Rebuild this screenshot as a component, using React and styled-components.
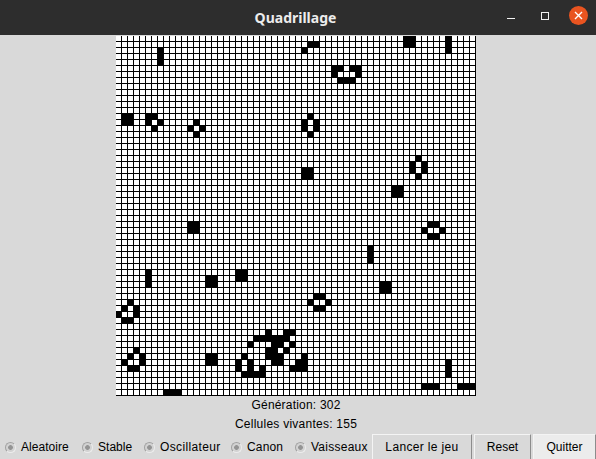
import React from "react";
import styled, { createGlobalStyle } from "styled-components";

const Global = createGlobalStyle`
  html, body { margin: 0; padding: 0; background: #d9d9d9; }
  * { box-sizing: border-box; }
`;

const Win = styled.div`
  width: 596px;
  height: 459px;
  overflow: hidden;
  background: #d9d9d9;
  display: flex;
  flex-direction: column;
  font-family: "Liberation Sans", Arial, sans-serif;
  font-size: 12px;
  color: #000;
`;

const TitleBar = styled.header`
  flex: none;
  height: 35px;
  background: #2d2d2d;
  display: grid;
  grid-template-columns: 1fr auto 1fr;
  align-items: center;
`;

const Title = styled.h1`
  grid-column: 2;
  margin: 0 5px 0 0;
  font-family: "Noto Sans", sans-serif;
  font-size: 14px;
  font-weight: 700;
  color: #ececec;
`;

const Controls = styled.div`
  grid-column: 3;
  justify-self: end;
  display: flex;
  align-items: center;
  padding: 0 8px 3px 0;
`;

const Ctl = styled.span`
  display: flex;
  width: 34px;
  height: 20px;
  align-items: center;
  justify-content: center;
`;

const CloseDisc = styled.span`
  display: flex;
  flex: none;
  width: 19px;
  height: 19px;
  margin-left: 7px;
  align-self: flex-start;
  align-items: center;
  justify-content: center;
  border-radius: 50%;
  background: #e95420;
`;

const Board = styled.div`
  flex: none;
  margin: 1px 0 0 116px;
  width: 360px;
  height: 360px;
  display: grid;
  grid-template-columns: repeat(60, 6px);
  grid-auto-rows: 6px;
  background: #000;
`;

const Cell = styled.div`
  width: 5px;
  height: 5px;
  background: ${(p) => (p.$alive ? "#000" : "#fff")};
`;

const Stat = styled.div`
  flex: none;
  height: 19px;
  line-height: 18px;
  text-align: center;
  padding-right: 4px;
  letter-spacing: ${(p) => p.$track}px;
`;

const Footer = styled.footer`
  flex: none;
  height: 26px;
  display: flex;
  align-items: flex-start;
`;

const Options = styled.div`
  flex: none;
  width: 372px;
  height: 26px;
  display: flex;
  align-items: center;
  padding-left: 5px;
`;

const Option = styled.label`
  flex: none;
  width: ${(p) => p.$w}px;
  display: flex;
  align-items: center;
  gap: 5px;
  white-space: nowrap;
  letter-spacing: ${(p) => p.$track}px;
`;

const RadioMark = styled.span`
  flex: none;
  width: 11px;
  height: 11px;
  border-radius: 50%;
  border: 1px solid;
  border-color: #a2a2a2 #ececec #ececec #a2a2a2;
  background: radial-gradient(circle, #949494 0 2px, #d2d2d2 2.7px);
`;

const Buttons = styled.div`
  flex: none;
  display: flex;
  gap: 2px;
`;

const Button = styled.button`
  flex: none;
  width: ${(p) => p.$w}px;
  height: 30px;
  margin: 0;
  padding: 0 0 4px;
  font: inherit;
  color: #000;
  letter-spacing: ${(p) => p.$track || 0}px;
  background: ${(p) => (p.$active ? "#ececec" : "#d9d9d9")};
  border: 1px solid;
  border-color: #f4f4f4 #8c8c8c #8c8c8c #f4f4f4;
`;

const ALIVE = {
  0: [48, 49, 55],
  1: [32, 33, 48, 49, 55],
  2: [7, 31, 55],
  3: [7],
  4: [7],
  5: [36, 37, 39, 40],
  6: [36, 40],
  7: [37, 38, 39],
  13: [1, 2, 5, 6, 32],
  14: [1, 2, 5, 7, 13, 31, 33],
  15: [6, 12, 14, 31, 33],
  16: [13, 32],
  20: [50],
  21: [49, 51],
  22: [31, 32, 49, 51],
  23: [31, 32, 50],
  25: [46, 47],
  26: [46, 47],
  31: [12, 13, 52, 53],
  32: [12, 13, 51, 54],
  33: [52, 53],
  35: [42],
  36: [42],
  37: [42],
  39: [5, 20, 21],
  40: [5, 15, 16, 20, 21],
  41: [5, 15, 16, 44, 45],
  42: [44, 45],
  43: [33, 34],
  44: [2, 32, 35],
  45: [1, 3, 33, 34],
  46: [0, 3],
  47: [1, 2],
  49: [25, 28, 29],
  50: [23, 24, 25, 26, 27, 28],
  51: [22, 26, 27, 29],
  52: [3, 25, 26, 28],
  53: [2, 4, 15, 16, 21, 25, 26, 27, 31],
  54: [1, 4, 15, 16, 20, 22, 26, 27, 30, 31, 55],
  55: [2, 3, 20, 22, 24, 29, 30, 31, 55],
  56: [21, 22, 23, 24, 55],
  58: [51, 52, 53, 57, 58, 59],
  59: [8, 9, 10],
};

const OPTIONS = [
  { label: "Aleatoire", track: 0.05, w: 77 },
  { label: "Stable", track: 0.02, w: 62 },
  { label: "Oscillateur", track: 0.35, w: 87 },
  { label: "Canon", track: 0.15, w: 64 },
  { label: "Vaisseaux", track: 0.25, w: 73 },
];

const cells = [];
for (let r = 0; r < 60; r++) {
  for (let c = 0; c < 60; c++) {
    cells.push(<Cell key={r * 60 + c} $alive={(ALIVE[r] || []).includes(c)} />);
  }
}

export default function App() {
  return (
    <Win>
      <Global />
      <TitleBar>
        <Title>Quadrillage</Title>
        <Controls>
          <Ctl>
            <svg width="8" height="8" viewBox="0 0 8 8"><rect x="0" y="6" width="8" height="1" fill="#f2f2f2" /></svg>
          </Ctl>
          <Ctl>
            <svg width="8" height="8" viewBox="0 0 8 8"><rect x="0.5" y="0.5" width="7" height="7" fill="none" stroke="#f2f2f2" /></svg>
          </Ctl>
          <CloseDisc>
            <svg width="9" height="9" viewBox="0 0 9 9"><path d="M1 1l7 7M8 1l-7 7" stroke="#fff" strokeWidth="1.4" fill="none" /></svg>
          </CloseDisc>
        </Controls>
      </TitleBar>
      <Board>{cells}</Board>
      <Stat $track={0.2}>Génération: 302</Stat>
      <Stat $track={0.25}>Cellules vivantes: 155</Stat>
      <Footer>
        <Options>
          {OPTIONS.map((o) => (
            <Option key={o.label} $track={o.track} $w={o.w}>
              <RadioMark />
              {o.label}
            </Option>
          ))}
        </Options>
        <Buttons>
          <Button $w={100} $track={0.35}>Lancer le jeu</Button>
          <Button $w={57}>Reset</Button>
          <Button $w={63} $active>Quitter</Button>
        </Buttons>
      </Footer>
    </Win>
  );
}
